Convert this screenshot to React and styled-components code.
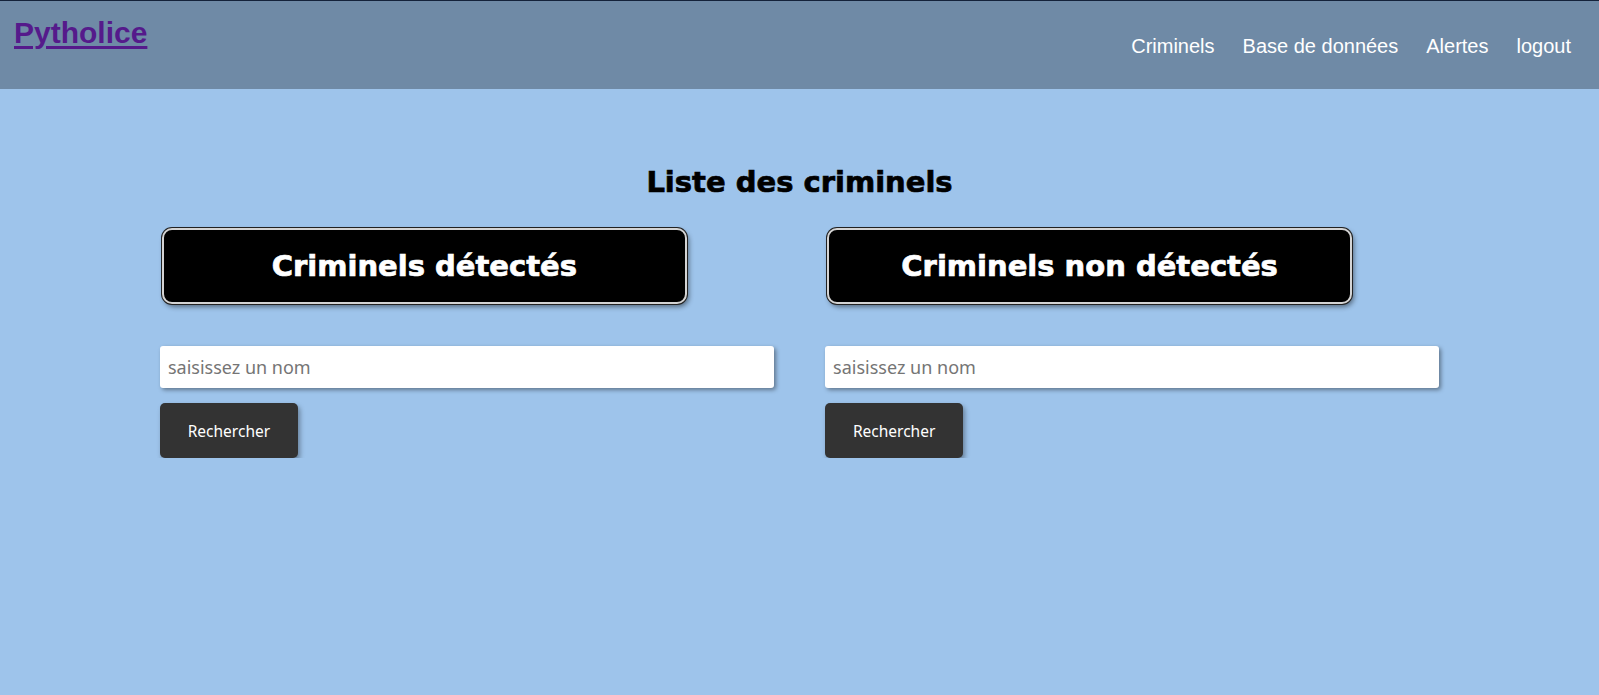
import React from "react";
import styled, { createGlobalStyle } from "styled-components";

const GlobalStyle = createGlobalStyle`
  * { box-sizing: border-box; }
  html, body {
    margin: 0;
    padding: 0;
    background: #9ec4eb;
    font-family: "Liberation Sans", Arial, sans-serif;
  }
`;

const Header = styled.header`
  height: 89px;
  border-top: 1px solid #14223a;
  background: #6f8aa6;
  display: flex;
  justify-content: space-between;
  align-items: center;
  padding: 0 28px 0 14px;
`;

const Logo = styled.a`
  align-self: flex-start;
  margin-top: 15px;
  font-size: 30px;
  font-weight: bold;
  color: #551a8b;
  text-decoration: underline;
  text-underline-offset: 3px;
`;

const Nav = styled.nav`
  display: flex;
  gap: 28px;
  margin-top: 2px;
`;

const NavLink = styled.a`
  color: #ffffff;
  font-size: 20px;
  text-decoration: none;
`;

const Main = styled.main`
  width: 80%;
  margin: 0 auto;
  padding-top: 76px;
`;

const Title = styled.h1`
  margin: 0 0 29px;
  text-align: center;
  font-family: "DejaVu Sans", "Liberation Sans", sans-serif;
  font-weight: bold;
  font-size: 29px;
  color: #000;
  -webkit-text-stroke: 0.7px #000;
`;

const Columns = styled.div`
  display: flex;
  justify-content: space-between;
`;

const Column = styled.section`
  width: 48%;
  display: flex;
  flex-direction: column;
  align-items: flex-start;
`;

const Card = styled.div`
  width: 525px;
  height: 76px;
  margin-left: 2px;
  display: flex;
  align-items: center;
  justify-content: center;
  background: #000;
  border: 2px solid #d4d4d4;
  border-radius: 10px;
  box-shadow: 0 0 0 1px #222, 2px 3px 5px rgba(0, 0, 0, 0.45);
  color: #fff;
  font-family: "DejaVu Sans", "Liberation Sans", sans-serif;
  font-weight: bold;
  font-size: 29px;
  -webkit-text-stroke: 0.7px #fff;
`;

const SearchInput = styled.input`
  width: 100%;
  height: 42px;
  margin-top: 42px;
  padding: 0 8px;
  border: none;
  border-radius: 3px;
  background: #fff;
  box-shadow: 2px 2px 4px rgba(0, 0, 0, 0.4);
  font-family: "Noto Sans", sans-serif;
  font-size: 18px;
  color: #333;
  outline: none;
  &::placeholder { color: #757575; }
`;

const SearchButton = styled.button`
  margin-top: 15px;
  width: 138px;
  height: 55px;
  border: none;
  border-radius: 5px;
  background: #333333;
  color: #fff;
  font-family: "Noto Sans", sans-serif;
  font-size: 15.5px;
  box-shadow: 2px 3px 5px rgba(0, 0, 0, 0.35);
  cursor: pointer;
`;

const lists = ["Criminels détectés", "Criminels non détectés"];

export default function App() {
  return (
    <>
      <GlobalStyle />
      <Header>
        <Logo href="#">Pytholice</Logo>
        <Nav>
          <NavLink href="#">Criminels</NavLink>
          <NavLink href="#">Base de données</NavLink>
          <NavLink href="#">Alertes</NavLink>
          <NavLink href="#">logout</NavLink>
        </Nav>
      </Header>
      <Main>
        <Title>Liste des criminels</Title>
        <Columns>
          {lists.map((label) => (
            <Column key={label}>
              <Card>{label}</Card>
              <SearchInput placeholder="saisissez un nom" />
              <SearchButton>Rechercher</SearchButton>
            </Column>
          ))}
        </Columns>
      </Main>
    </>
  );
}
